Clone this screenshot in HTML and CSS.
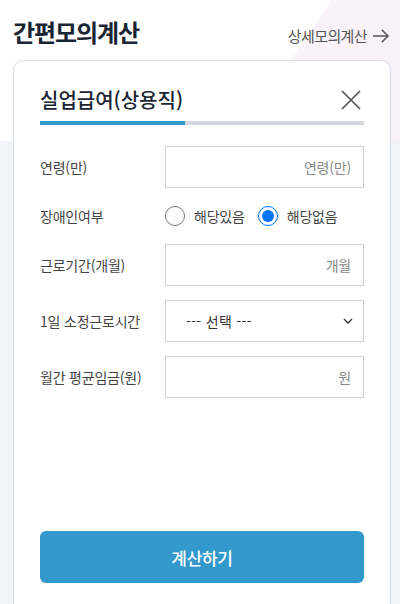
FILE: index.html
```html
<!DOCTYPE html>
<html lang="ko">
<head>
  <meta charset="UTF-8" />
  <title>간편모의계산</title>
  <link rel="stylesheet" href="styles.css">
</head>
<body>

  <div class="top-bar">
    <h1>간편모의계산</h1>
    <a href="#" class="detail-link">상세모의계산
      <svg width="18" height="14" viewBox="0 0 18 14"><path d="M1 7h15M10 1l6 6-6 6" fill="none" stroke="#555" stroke-width="1.5"/></svg>
    </a>
  </div>

  <div class="calc-card">
    <div class="card-head">
      <h2>실업급여(상용직)</h2>
      <button class="close-btn" type="button" aria-label="닫기">
        <svg width="20" height="20" viewBox="0 0 20 20"><path d="M1 1l18 18M19 1L1 19" stroke="#555" stroke-width="1.7"/></svg>
      </button>
    </div>
    <div class="progress"><div class="progress-fill"></div></div>

    <form class="calc-form">
      <div class="row">
        <label for="age">연령(만)</label>
        <input type="text" id="age" placeholder="연령(만)" />
      </div>

      <div class="row">
        <span class="label">장애인여부</span>
        <div class="radios">
          <label class="radio"><input type="radio" name="disabled" /> 해당있음</label>
          <label class="radio"><input type="radio" name="disabled" checked /> 해당없음</label>
        </div>
      </div>

      <div class="row">
        <label for="months">근로기간(개월)</label>
        <input type="text" id="months" placeholder="개월" />
      </div>

      <div class="row">
        <label for="hours">1일 소정근로시간</label>
        <select id="hours">
          <option>--- 선택 ---</option>
        </select>
      </div>

      <div class="row">
        <label for="wage">월간 평균임금(원)</label>
        <input type="text" id="wage" placeholder="원" />
      </div>

      <button type="submit" class="submit-btn">계산하기</button>
    </form>
  </div>

</body>
</html>
```

FILE: styles.css
```css
html {
  background: #f0f4f9;
}

body {
  margin: 0;
  min-height: 604px;
  font-family: "Noto Sans CJK KR", "Noto Sans", sans-serif;
  background:
    linear-gradient(124deg, #fff 67%, #faf2f9 67%) top / 100% 141px no-repeat,
    #f0f4f9;
  overflow: hidden;
}

.top-bar {
  display: flex;
  justify-content: space-between;
  align-items: baseline;
  height: 60px;
  box-sizing: border-box;
  padding: 14px 10px 0 13px;
}

.top-bar h1 {
  margin: 0;
  font-size: 24px;
  line-height: 36px;
  font-weight: 700;
  letter-spacing: -1.1px;
  color: #1a2533;
}

.detail-link {
  display: flex;
  align-items: center;
  gap: 5px;
  font-size: 15px;
  letter-spacing: -0.6px;
  color: #555;
  text-decoration: none;
}

.calc-card {
  margin: 0 9px 0 13px;
  padding: 25px 26px 40px;
  background: white;
  border: 1px solid #d4dce6;
  border-radius: 10px;
}

.card-head {
  display: flex;
  justify-content: space-between;
  align-items: center;
  height: 28px;
}

.card-head h2 {
  margin: 0;
  font-size: 20px;
  line-height: 28px;
  font-weight: 500;
  letter-spacing: 0;
  color: #1a2533;
}

.close-btn {
  border: none;
  background: none;
  padding: 0;
  margin-right: 3px;
  width: 20px;
  height: 20px;
}

.progress {
  margin-top: 7px;
  height: 4px;
  background: #d2d8de;
}

.progress-fill {
  width: 145px;
  height: 100%;
  background: #3399cc;
}

.calc-form {
  margin-top: 21px;
}

.row {
  display: grid;
  grid-template-columns: 125px 1fr;
  align-items: center;
  margin-bottom: 14px;
  font-size: 14px;
  letter-spacing: -0.2px;
  color: #444;
}

.row input[type="text"], .row select {
  height: 42px;
  box-sizing: border-box;
  border: 1px solid #ccd3da;
  border-radius: 0;
  background: white;
  font-family: inherit;
  font-size: 14px;
  letter-spacing: -0.2px;
}

.row input[type="text"] {
  padding: 0 12px;
  text-align: right;
}

.row input::placeholder {
  color: #888;
}

.row select {
  appearance: none;
  padding: 0 20px;
  color: #333;
  letter-spacing: 0.3px;
  background: white url("data:image/svg+xml,%3Csvg xmlns='http://www.w3.org/2000/svg' width='10' height='6'%3E%3Cpath d='M1 1l4 4 4-4' fill='none' stroke='%23333' stroke-width='1.3'/%3E%3C/svg%3E") no-repeat right 10px center;
}

.radios {
  display: flex;
  align-items: center;
  gap: 13px;
  height: 28px;
}

.radio {
  display: flex;
  align-items: center;
  gap: 9px;
}

.radio input {
  width: 20px;
  height: 20px;
  margin: 0;
}

.submit-btn {
  display: block;
  width: 100%;
  height: 52px;
  margin-top: 133px;
  border: none;
  border-radius: 6px;
  background: #3399cc;
  color: white;
  font-family: inherit;
  font-size: 17px;
  font-weight: 500;
  letter-spacing: -0.3px;
}
```
